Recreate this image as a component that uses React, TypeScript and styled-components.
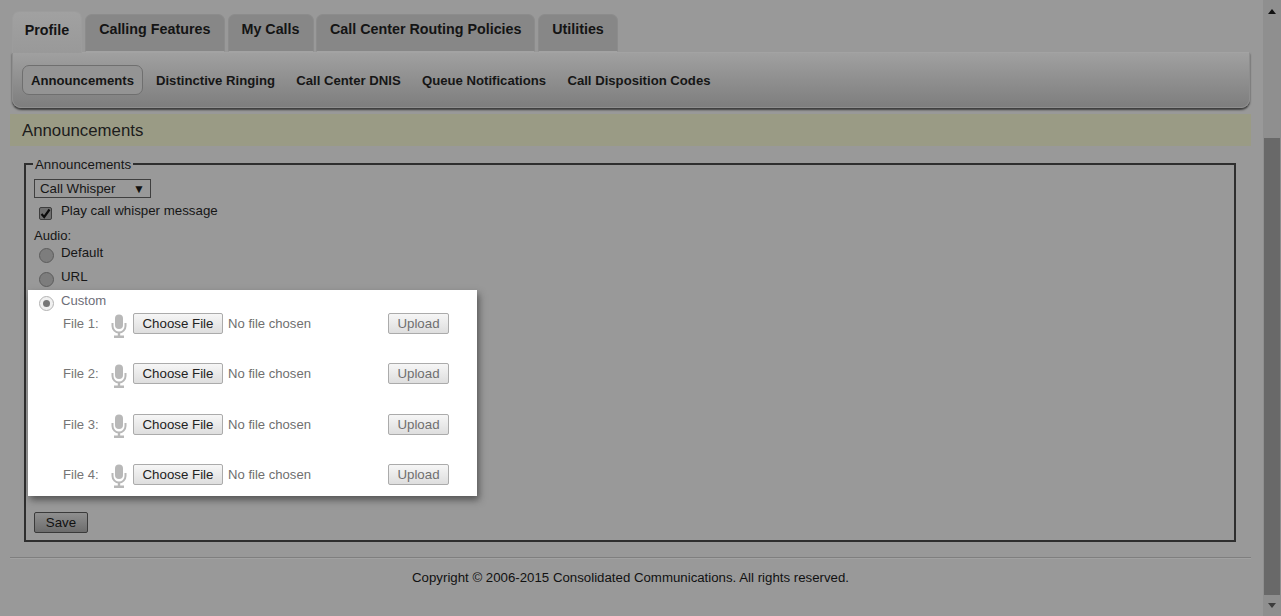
import React from "react"
import styled, {createGlobalStyle} from "styled-components"

const GlobalStyle = createGlobalStyle`
    html, body {
        margin: 0;
        padding: 0;
        height: 100%;
        overflow: hidden;
        background: #999999;
        font-family: "Liberation Sans", Arial, sans-serif;
        color: #111;
    }
`
const Page = styled.div`
    display: flex;
    width: 1281px;
    height: 616px;
    background: #999999;
`
const Main = styled.div`
    width: 1263px;
    padding: 10px 12px 0 10px;
    box-sizing: border-box;
`
const TabRow = styled.div`
    display: flex;
    align-items: flex-end;
    gap: 2.75px;
    height: 42px;
    margin-left: 2px;
    position: relative;
    z-index: 1;
`
const Tab = styled.div<{$active?: boolean, $w: number}>`
    width: ${p => p.$w}px;
    height: ${p => (p.$active ? 42 : 38)}px;
    box-sizing: border-box;
    padding-top: ${p => (p.$active ? 10 : 6)}px;
    text-align: center;
    font-size: 14.3px;
    font-weight: bold;
    line-height: 17px;
    color: #141414;
    border-radius: 7px 7px 0 0;
    background: ${p => (p.$active ? "linear-gradient(#a1a1a1, #999)" : "#878787")};
    border: 1px solid ${p => (p.$active ? "#9c9c9c" : "#8c8c8c")};
    border-bottom: ${p => (p.$active ? "none" : "1px solid #a3a3a3")};
    margin-bottom: ${p => (p.$active ? -1 : 0)}px;
`
const SubBar = styled.div`
    display: flex;
    align-items: center;
    height: 56px;
    margin-left: 2px;
    width: 1238px;
    box-sizing: border-box;
    padding: 0 0 0 9px;
    background: linear-gradient(#a0a0a0, #7e7e7e);
    border-radius: 0 0 9px 9px;
    border: 1px solid #8e8e8e;
    border-top: 1px solid #a3a3a3;
    box-shadow: 0 2px 2px #3c3c3c;
`
const SubLink = styled.div<{$active?: boolean}>`
    height: 30px;
    box-sizing: border-box;
    padding: 0 ${p => (p.$active ? 8 : 0)}px;
    margin-right: ${p => (p.$active ? 13 : 21.3)}px;
    display: flex;
    align-items: center;
    font-size: 13.15px;
    font-weight: bold;
    color: #161616;
    border-radius: 7px;
    border: ${p => (p.$active ? "1px solid #6f6f6f" : "none")};
    background: ${p => (p.$active ? "#949494" : "transparent")};
`
const TitleBand = styled.div`
    margin-top: 6px;
    height: 32px;
    width: 1241px;
    box-sizing: border-box;
    padding-left: 12px;
    background: #9a9b85;
    font-size: 16.8px;
    line-height: 33px;
    color: #1c1c1c;
`
const FieldSet = styled.fieldset`
    margin: 10px 0 0 14px;
    width: 1212px;
    height: 386px;
    box-sizing: border-box;
    padding: 7px 8px 0;
    border: 2px solid #2e2e2e;
    min-inline-size: 0;
`
const Legend = styled.legend`
    margin-left: -1px;
    padding: 2px 2px 0;
    font-size: 13.3px;
    line-height: 14px;
    color: #161616;
`
const Select = styled.div`
    display: flex;
    justify-content: space-between;
    align-items: center;
    width: 117px;
    height: 19px;
    box-sizing: border-box;
    padding: 0 5px 0 5px;
    border: 1px solid #3f3f3f;
    font-size: 13.3px;
    color: #161616;
`
const Arrow = styled.span`
    font-size: 12px;
    color: #111;
`
const OptionRow = styled.div<{$top: number, $h: number}>`
    display: flex;
    align-items: flex-start;
    gap: 7px;
    height: ${p => p.$h}px;
    margin-top: ${p => p.$top}px;
    padding-left: 5px;
    font-size: 13.3px;
    line-height: 16px;
    color: #161616;
`
const CheckBox = styled.span`
    display: flex;
    align-items: center;
    justify-content: center;
    width: 13px;
    height: 13px;
    margin: 4px 2px 0 0;
    box-sizing: border-box;
    border: 1px solid #3d3d3d;
    border-radius: 2px;
    background: #6f6f6f;
`
const Radio = styled.span<{$on?: boolean, $lit?: boolean}>`
    display: flex;
    align-items: center;
    justify-content: center;
    width: 15px;
    height: 15px;
    margin-top: 3px;
    box-sizing: border-box;
    border-radius: 50%;
    border: 1px solid ${p => (p.$lit ? "#b3b3b3" : "#5c5c5c")};
    background: ${p => (p.$lit ? "#f0f0f0" : "#7d7d7d")};
    &::after {
        content: "";
        display: ${p => (p.$on ? "block" : "none")};
        width: 7px;
        height: 7px;
        border-radius: 50%;
        background: #777;
    }
`
const AudioLabel = styled.div`
    margin-top: 1px;
    font-size: 13.1px;
    line-height: 16px;
    color: #161616;
`
const Spotlight = styled.div`
    width: 449px;
    height: 206px;
    margin: -3px 0 0 -6px;
    box-sizing: border-box;
    padding: 3px 0 0 6px;
    background: #fff;
    box-shadow: 2px 4px 7px rgba(30, 30, 30, 0.55);
    font-size: 13.1px;
    color: #6f6f6f;
`
const CustomRow = styled.div`
    display: flex;
    align-items: flex-start;
    gap: 7px;
    height: 20px;
    padding-left: 5px;
    line-height: 16px;
    color: #6e6e78;
`
const FileList = styled.div`
    display: flex;
    flex-direction: column;
    gap: 29.3px;
`
const FileRow = styled.div`
    display: flex;
    align-items: center;
    height: 21px;
    padding-left: 29px;
`
const FileLabel = styled.span`
    width: 47px;
    color: #757575;
`
const Mic = styled.svg`
    width: 18px;
    height: 24px;
    margin: 4px 5px 0 0;
    flex: none;
`
const ChooseButton = styled.div`
    width: 90px;
    height: 21px;
    box-sizing: border-box;
    display: flex;
    align-items: center;
    justify-content: center;
    border: 1px solid #ababab;
    border-radius: 2px;
    background: linear-gradient(#f6f6f6, #dedede);
    font-size: 13.3px;
    color: #222;
`
const NoFile = styled.span`
    width: 160px;
    margin-left: 5px;
    color: #6f6f6f;
`
const UploadButton = styled(ChooseButton)`
    width: 61px;
    color: #6f6f6f;
`
const SaveButton = styled.div`
    width: 54px;
    height: 21px;
    margin-top: 16px;
    box-sizing: border-box;
    display: flex;
    align-items: center;
    justify-content: center;
    border: 1px solid #3a3a3a;
    border-radius: 2px;
    background: linear-gradient(#8f8f8f, #6d6d6d);
    font-size: 13.3px;
    color: #111;
`
const Rule = styled.div`
    width: 1241px;
    height: 1px;
    margin-top: 15px;
    background: #7f7f7f;
    box-shadow: 0 1px 0 #a2a2a2;
`
const Footer = styled.div`
    width: 1241px;
    margin-top: 13px;
    text-align: center;
    font-size: 13.25px;
    line-height: 14px;
    color: #111;
`
const ScrollTrack = styled.div`
    width: 18px;
    height: 616px;
    background: #8f8f8f;
    display: flex;
    flex-direction: column;
    align-items: flex-start;
`
const ScrollButton = styled.div<{$flip?: boolean}>`
    height: ${p => (p.$flip ? 21 : 138)}px;
    width: 100%;
    display: flex;
    justify-content: center;
    padding-top: ${p => (p.$flip ? 8 : 9)}px;
    box-sizing: border-box;
    &::before {
        content: "";
        width: 0;
        height: 0;
        border-left: 4px solid transparent;
        border-right: 4px solid transparent;
        ${p => (p.$flip
            ? "border-top: 5px solid #3c3c3c;"
            : "border-bottom: 5px solid #111;")}
    }
`
const ScrollThumb = styled.div`
    width: 16px;
    height: 457px;
    margin-left: 1px;
    background: #696969;
`

const tabs = [
    {label: "Profile", w: 70, active: true},
    {label: "Calling Features", w: 140},
    {label: "My Calls", w: 86},
    {label: "Call Center Routing Policies", w: 219},
    {label: "Utilities", w: 80},
]

const MicIcon = () => (
    <Mic viewBox="0 0 18 24">
        <rect x="5" y="0.5" width="8" height="14.5" rx="4" fill="#b8b8b8"/>
        <path d="M2.5 9v3a6.5 6.5 0 0 0 13 0V9" fill="none" stroke="#b8b8b8" strokeWidth="2"/>
        <path d="M9 18.5v3M4 22.7h10" fill="none" stroke="#b8b8b8" strokeWidth="2.4"/>
    </Mic>
)

const App: React.FC = () => {
    return (
        <Page>
            <GlobalStyle/>
            <Main>
                <TabRow>
                    {tabs.map(t => (
                        <Tab key={t.label} $w={t.w} $active={t.active}>{t.label}</Tab>
                    ))}
                </TabRow>
                <SubBar>
                    <SubLink $active>Announcements</SubLink>
                    <SubLink>Distinctive Ringing</SubLink>
                    <SubLink>Call Center DNIS</SubLink>
                    <SubLink>Queue Notifications</SubLink>
                    <SubLink>Call Disposition Codes</SubLink>
                </SubBar>
                <TitleBand>Announcements</TitleBand>
                <FieldSet>
                    <Legend>Announcements</Legend>
                    <Select>Call Whisper<Arrow>▼</Arrow></Select>
                    <OptionRow $top={5} $h={24}>
                        <CheckBox>
                            <svg width="11" height="11" viewBox="0 0 11 11">
                                <path d="M1.5 6l2.7 3L9.5 1.5" fill="none" stroke="#0c0c0c" strokeWidth="2.2"/>
                            </svg>
                        </CheckBox>
                        Play call whisper message
                    </OptionRow>
                    <AudioLabel>Audio:</AudioLabel>
                    <OptionRow $top={1} $h={24}><Radio/>Default</OptionRow>
                    <OptionRow $top={0} $h={24}><Radio/>URL</OptionRow>
                    <Spotlight>
                        <CustomRow><Radio $on $lit/>Custom</CustomRow>
                        <FileList>
                            {[1, 2, 3, 4].map(n => (
                                <FileRow key={n}>
                                    <FileLabel>File {n}:</FileLabel>
                                    <MicIcon/>
                                    <ChooseButton>Choose File</ChooseButton>
                                    <NoFile>No file chosen</NoFile>
                                    <UploadButton>Upload</UploadButton>
                                </FileRow>
                            ))}
                        </FileList>
                    </Spotlight>
                    <SaveButton>Save</SaveButton>
                </FieldSet>
                <Rule/>
                <Footer>Copyright © 2006-2015 Consolidated Communications. All rights reserved.</Footer>
            </Main>
            <ScrollTrack>
                <ScrollButton/>
                <ScrollThumb/>
                <ScrollButton $flip/>
            </ScrollTrack>
        </Page>
    )
}
export default App
